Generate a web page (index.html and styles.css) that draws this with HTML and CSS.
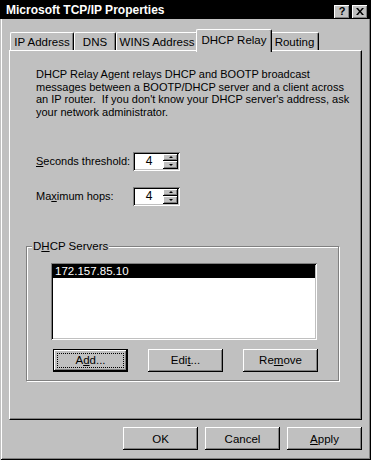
FILE: index.html
```html
<!DOCTYPE html>
<html lang="en">
<head>
    <meta charset="UTF-8">
    <title>Microsoft TCP/IP Properties</title>
    <link rel="stylesheet" href="styles.css">
</head>
<body>
<div class="window">
    <div class="titlebar">
        <span class="title">Microsoft TCP/IP Properties</span>
        <div class="caption-buttons">
            <span class="cap-btn help">?</span>
            <span class="cap-btn close">
                <svg width="8" height="7" viewBox="0 0 8 7"><path d="M0 0h2l2 2.4L6 0h2L5 3.5 8 7H6L4 4.6 2 7H0l3-3.5z" fill="#000"/></svg>
            </span>
        </div>
    </div>
    <div class="tabs">
        <div class="tab tab-ip">IP Address</div>
        <div class="tab tab-dns">DNS</div>
        <div class="tab tab-wins">WINS Address</div>
        <div class="tab tab-relay active">DHCP Relay</div>
        <div class="tab tab-routing">Routing</div>
    </div>
    <div class="panel">
        <p class="intro">DHCP Relay Agent relays DHCP and BOOTP broadcast<br>messages between a BOOTP/DHCP server and a client across<br>an IP router.&nbsp; If you don't know your DHCP server's address, ask<br>your network administrator.</p>
        <div class="field field-seconds">
            <label class="field-label"><u>S</u>econds threshold:</label>
            <div class="spin">
                <span class="spin-value">4</span>
                <div class="spin-arrows">
                    <span class="spin-btn"><span class="arrow-up"></span></span>
                    <span class="spin-btn"><span class="arrow-down"></span></span>
                </div>
            </div>
        </div>
        <div class="field field-hops">
            <label class="field-label">Ma<u>x</u>imum hops:</label>
            <div class="spin">
                <span class="spin-value">4</span>
                <div class="spin-arrows">
                    <span class="spin-btn"><span class="arrow-up"></span></span>
                    <span class="spin-btn"><span class="arrow-down"></span></span>
                </div>
            </div>
        </div>
        <fieldset class="group">
            <legend>D<u>H</u>CP Servers</legend>
            <div class="listbox">
                <div class="list-item selected">172.157.85.10</div>
            </div>
            <div class="group-buttons">
                <button class="btn default"><span class="focus">A<u>d</u>d...</span></button>
                <button class="btn">Edi<u>t</u>...</button>
                <button class="btn">Re<u>m</u>ove</button>
            </div>
        </fieldset>
    </div>
    <div class="footer">
        <button class="btn">OK</button>
        <button class="btn">Cancel</button>
        <button class="btn"><u>A</u>pply</button>
    </div>
</div>
</body>
</html>
```

FILE: styles.css
```css
body {
    margin: 0;
    background: #c0c0c0;
    font-family: "Liberation Sans", Arial, sans-serif;
    font-size: 11px;
    color: #000;
}
.window {
    width: 371px;
    height: 460px;
    box-sizing: border-box;
    background: #c0c0c0;
    box-shadow: inset 1px 0 #c0c0c0, inset -1px -1px #000, inset 2px 0 #fff, inset -2px -2px #808080;
}
.titlebar {
    height: 19px;
    background: #000;
    display: flex;
    align-items: center;
    justify-content: space-between;
    padding: 0 3px 0 6px;
}
.title {
    color: #fff;
    font-weight: bold;
    font-size: 12px;
}
.caption-buttons {
    display: flex;
    gap: 2px;
    margin-top: 4px;
}
.cap-btn {
    width: 16px;
    height: 14px;
    box-sizing: border-box;
    background: #c0c0c0;
    box-shadow: inset -1px -1px #000, inset 1px 1px #fff, inset -2px -2px #808080;
    display: flex;
    align-items: center;
    justify-content: center;
    font-weight: bold;
    font-size: 11px;
    line-height: 1;
}
.cap-btn.close svg {
    margin-left: -1px;
}
.tabs {
    display: flex;
    align-items: flex-end;
    height: 21px;
    margin-top: 10px;
    padding-left: 10px;
}
.tab {
    height: 18px;
    box-sizing: border-box;
    border-left: 1px solid #fff;
    border-top: 1px solid #fff;
    border-right: 1px solid #000;
    border-radius: 2px 2px 0 0;
    box-shadow: inset -1px 0 #808080;
    display: flex;
    align-items: center;
    justify-content: center;
    padding-top: 1px;
    font-size: 11.5px;
}
.tab-ip { width: 64px; }
.tab-dns { width: 42px; }
.tab-wins { width: 82px; }
.tab-relay { width: 72px; }
.tab-routing { width: 49px; }
.tab.active {
    position: relative;
    z-index: 1;
    height: 23px;
    margin: 0 -2px -2px;
    width: 76px;
    background: #c0c0c0;
    padding-bottom: 4px;
}
.panel {
    width: 353px;
    height: 370px;
    box-sizing: border-box;
    margin-left: 9px;
    border-left: 1px solid #fff;
    border-top: 1px solid #fff;
    border-right: 1px solid #000;
    border-bottom: 1px solid #000;
    box-shadow: inset -1px -1px #808080;
    padding-top: 17px;
}
.intro {
    margin: 0 0 0 26px;
    line-height: 12.7px;
}
.field {
    display: flex;
    align-items: center;
    margin-left: 26px;
}
.field-seconds {
    margin-top: 33px;
}
.field-hops {
    margin-top: 16px;
}
.field-label {
    width: 97px;
}
.spin {
    width: 47px;
    height: 19px;
    box-sizing: border-box;
    background: #fff;
    box-shadow: inset 1px 1px #808080, inset -1px -1px #fff, inset 2px 2px #000, inset -2px -2px #c0c0c0;
    display: flex;
    padding: 2px;
}
.spin-value {
    flex: 1;
    text-align: center;
    line-height: 15px;
    font-size: 12px;
}
.spin-arrows {
    width: 15px;
    display: flex;
    flex-direction: column;
}
.spin-btn {
    flex: 1;
    background: #c0c0c0;
    box-shadow: inset -1px -1px #000, inset 1px 1px #fff, inset -2px -2px #808080;
    display: flex;
    align-items: center;
    justify-content: center;
}
.arrow-up {
    border-left: 2px solid transparent;
    border-right: 2px solid transparent;
    border-bottom: 2px solid #000;
    margin-top: -1px;
}
.arrow-down {
    border-left: 2px solid transparent;
    border-right: 2px solid transparent;
    border-top: 2px solid #000;
    margin-top: -1px;
}
.group {
    width: 313px;
    box-sizing: border-box;
    margin: 34px 0 0 16px;
    padding: 0 0 8px 0;
    border: 1px solid #808080;
    box-shadow: 1px 1px 0 #fff, inset 1px 1px 0 #fff;
}
.group legend {
    margin-left: 5px;
    padding: 0 1px;
    background: #c0c0c0;
    line-height: 13px;
    font-size: 11.5px;
}
.listbox {
    width: 266px;
    height: 77px;
    box-sizing: border-box;
    margin: 10px 0 0 24px;
    background: #fff;
    box-shadow: inset 1px 1px #808080, inset -1px -1px #fff, inset 2px 2px #000, inset -2px -2px #c0c0c0;
    padding: 2px;
}
.list-item {
    height: 13px;
    line-height: 13px;
    padding-left: 2px;
    font-size: 11.5px;
}
.list-item.selected {
    background: #000;
    color: #fff;
}
.group-buttons {
    display: flex;
    gap: 20px;
    margin: 9px 0 0 26px;
}
.btn {
    width: 75px;
    height: 23px;
    box-sizing: border-box;
    border: none;
    padding: 0;
    background: #c0c0c0;
    font-family: inherit;
    font-size: 11.5px;
    color: #000;
    box-shadow: inset -1px -1px #000, inset 1px 1px #fff, inset -2px -2px #808080;
}
.btn.default {
    border: 1px solid #000;
    padding: 3px;
}
.btn .focus {
    display: flex;
    align-items: center;
    justify-content: center;
    height: 100%;
    border: 1px dotted #000;
    box-sizing: border-box;
}
.footer {
    display: flex;
    justify-content: flex-end;
    gap: 7px;
    margin-top: 7px;
    padding-right: 9px;
}
```
